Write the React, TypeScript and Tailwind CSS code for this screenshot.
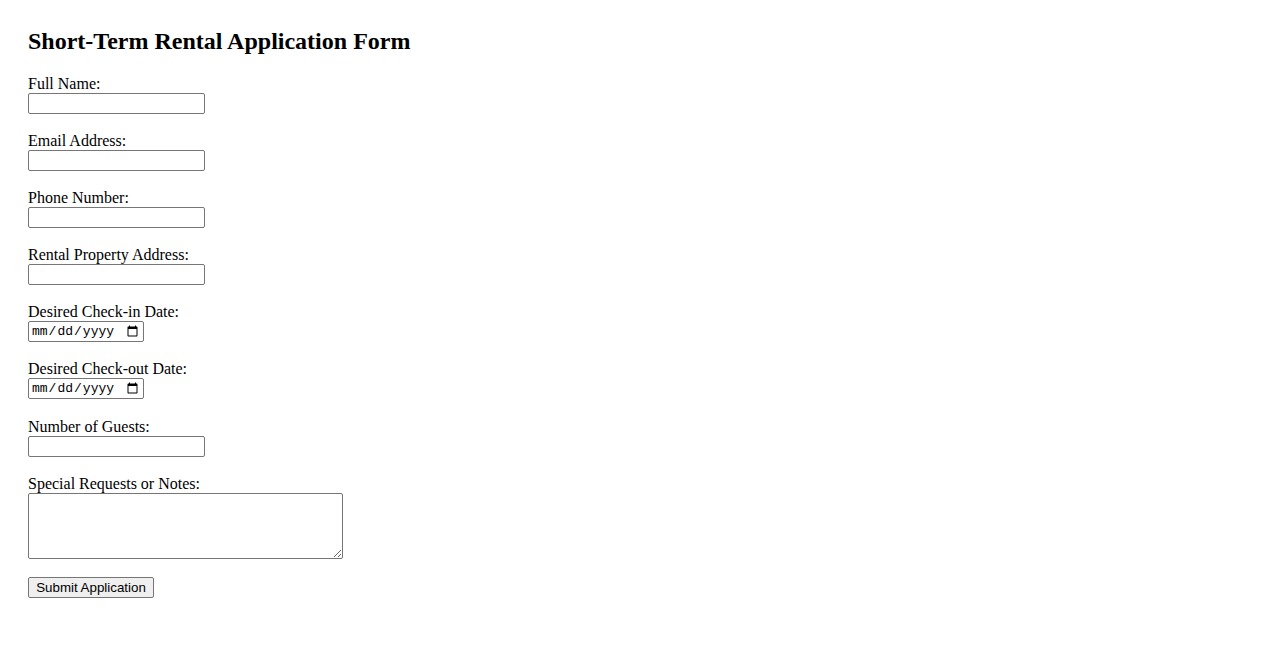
import React from 'react';

const fields: { label: string; type: string }[] = [
  { label: 'Full Name:', type: 'text' },
  { label: 'Email Address:', type: 'email' },
  { label: 'Phone Number:', type: 'tel' },
  { label: 'Rental Property Address:', type: 'text' },
  { label: 'Desired Check-in Date:', type: 'date' },
  { label: 'Desired Check-out Date:', type: 'date' },
  { label: 'Number of Guests:', type: 'number' },
];

const inputBase =
  'block h-[21px] border border-[#767676] rounded-[2px] bg-white px-[2px] text-black outline-none';

export default function App() {
  return (
    <div className="min-h-[650px] bg-white px-[28px] pt-[28px] font-['Liberation_Serif',serif] text-[16px] text-black">
      <h2 className="mb-[20px] text-[24px] font-bold leading-[27px]">Short-Term Rental Application Form</h2>

      <form onSubmit={(e) => e.preventDefault()}>
        {fields.map((f) => (
          <div key={f.label} className="mb-[18.1px]">
            <label className="block leading-[18px]">{f.label}</label>
            {f.type === 'date' ? (
              <input
                type="date"
                className={`${inputBase} w-[116px] font-['Liberation_Mono',monospace] text-[13px]`}
              />
            ) : (
              <input
                type="text"
                className={`${inputBase} w-[177px] font-['Liberation_Sans',sans-serif] text-[13.33px]`}
              />
            )}
          </div>
        ))}

        <div className="mb-[18px]">
          <label className="block leading-[18px]">Special Requests or Notes:</label>
          <textarea className="block h-[66px] w-[315px] rounded-[2px] border border-[#767676] bg-white p-[2px] font-['Liberation_Mono',monospace] text-[13px] outline-none" />
        </div>

        <button
          type="submit"
          className="block h-[21px] w-[126px] rounded-[2px] border border-[#767676] bg-[#efefef] px-[6px] font-['Liberation_Sans',sans-serif] text-[13.33px] leading-[17px] text-black"
        >
          Submit Application
        </button>
      </form>
    </div>
  );
}
